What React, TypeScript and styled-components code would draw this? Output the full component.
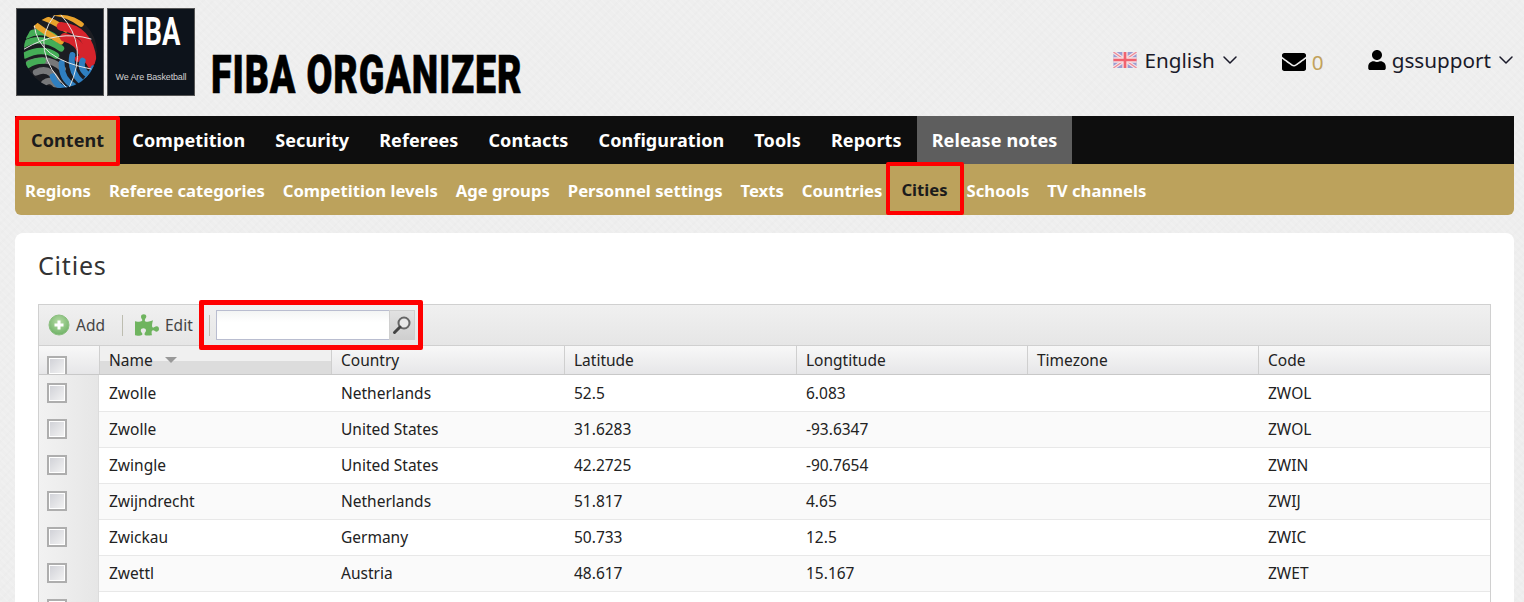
import styled, { createGlobalStyle } from "styled-components";
import { FaEnvelope, FaUser, FaPuzzlePiece } from "react-icons/fa";
import { FiChevronDown } from "react-icons/fi";

const mainMenu = ["Content", "Competition", "Security", "Referees", "Contacts", "Configuration", "Tools", "Reports", "Release notes"];
const subMenu = ["Regions", "Referee categories", "Competition levels", "Age groups", "Personnel settings", "Texts", "Countries", "Cities", "Schools", "TV channels"];
const columns = ["Name", "Country", "Latitude", "Longtitude", "Timezone", "Code"];
const rows = [
  ["Zwolle", "Netherlands", "52.5", "6.083", "", "ZWOL"],
  ["Zwolle", "United States", "31.6283", "-93.6347", "", "ZWOL"],
  ["Zwingle", "United States", "42.2725", "-90.7654", "", "ZWIN"],
  ["Zwijndrecht", "Netherlands", "51.817", "4.65", "", "ZWIJ"],
  ["Zwickau", "Germany", "50.733", "12.5", "", "ZWIC"],
  ["Zwettl", "Austria", "48.617", "15.167", "", "ZWET"],
  ["", "", "", "", "", ""],
];

const GlobalStyle = createGlobalStyle`
  html, body {
    margin: 0;
    height: 100%;
    overflow: hidden;
  }
  body {
    background-color: #eeeeee;
    background-image:
      repeating-linear-gradient(45deg, rgba(255,255,255,0.12) 0 2px, transparent 2px 5px),
      repeating-linear-gradient(-45deg, rgba(0,0,0,0.006) 0 2px, transparent 2px 7px);
    font-family: "Noto Sans", "Open Sans", sans-serif;
    color: #111;
  }
  * { box-sizing: border-box; }
`;

const Page = styled.div`
  padding: 8px 10px 0 15px;
`;

const Header = styled.header`
  display: flex;
  justify-content: space-between;
  height: 108px;
`;

const Brand = styled.div`
  display: flex;
  align-items: flex-start;
  padding-left: 1px;
`;

const LogoTile = styled.div`
  width: 88px;
  height: 88px;
  background: #0d131b;
  border: 1px solid #555;
  margin-right: 3px;
  display: flex;
  flex-direction: column;
  align-items: center;
`;

const LogoWord = styled.span`
  font-family: "Roboto", sans-serif;
  font-weight: 700;
  font-size: 38px;
  line-height: 36px;
  margin-top: 5px;
  color: #fff;
  transform: scaleX(0.72);
`;

const LogoTag = styled.span`
  font-family: "Liberation Sans", sans-serif;
  font-size: 9px;
  letter-spacing: -0.15px;
  color: #d0d0d0;
  margin-top: 22px;
  white-space: nowrap;
`;

const Title = styled.div`
  font-family: "Roboto", sans-serif;
  font-weight: 900;
  font-size: 53px;
  line-height: 53px;
  color: #000;
  letter-spacing: 1.2px;
  margin: 41px 0 0 13px;
  transform: scaleX(0.71);
  transform-origin: left center;
  -webkit-text-stroke: 0.6px #000;
  white-space: nowrap;
`;

const UserBar = styled.div`
  display: flex;
  align-items: center;
  height: 104px;
  margin-right: -4px;
  font-size: 20.7px;
  color: #1a1a2a;
`;

const UserItem = styled.div<{ $gap: number; $drop?: number }>`
  display: flex;
  align-items: center;
  margin-right: ${(p) => p.$gap}px;
  margin-top: ${(p) => p.$drop ?? 0}px;
  svg { flex: none; }
`;

const Chevron = styled(FiChevronDown)`
  width: 24px;
  height: 24px;
  margin-left: 3px;
  stroke-width: 1.5;
`;

const MailCount = styled.span`
  color: #c2a25c;
  margin-left: 6px;
`;

const MainMenu = styled.nav`
  display: flex;
  height: 48px;
  background: #0e0e0e;
`;

const MainItem = styled.div<{ $active?: boolean; $muted?: boolean }>`
  display: flex;
  align-items: center;
  padding: 0 15px;
  font-size: 18px;
  font-weight: 700;
  letter-spacing: 0.1px;
  color: ${(p) => (p.$active ? "#1c1c1c" : "#fff")};
  background: ${(p) => (p.$active ? "#bca25c" : p.$muted ? "#5e5e5e" : "transparent")};
  ${(p) =>
    p.$active &&
    `border: 4px solid #f00;
     border-radius: 2px;
     height: 50px;
     position: relative;
     padding: 0 12px 2px;
     margin-right: -3px;`}
`;

const SubMenu = styled.nav`
  display: flex;
  height: 51px;
  padding-left: 1px;
  background: #bca25c;
  border-radius: 0 0 6px 6px;
`;

const SubItem = styled.div<{ $active?: boolean }>`
  display: flex;
  align-items: center;
  padding: 1px 9px 0;
  font-size: 16.65px;
  font-weight: 700;
  color: ${(p) => (p.$active ? "#1c1c1c" : "#fff")};
  ${(p) =>
    p.$active &&
    `border: 4px solid #f00;
     border-radius: 2px;
     position: relative;
     margin: -2px -6px 0 -5px;
     padding: 2px 12px 0 11px;
     height: 53px;`}
`;

const Card = styled.main`
  margin-top: 18px;
  height: 400px;
  padding: 17px 23px 0;
  background: #fff;
  border-radius: 8px 8px 0 0;
`;

const CardTitle = styled.h1`
  margin: 0 0 20px;
  height: 34px;
  font-size: 25px;
  line-height: 30px;
  font-weight: 400;
  letter-spacing: 0.8px;
  color: #333;
`;

const Grid = styled.section`
  width: 1453px;
  border: 1px solid #d0d0d0;
  border-bottom: 0;
  font-size: 15.5px;
`;

const Toolbar = styled.div`
  display: flex;
  align-items: center;
  height: 40px;
  padding-left: 9px;
  background: linear-gradient(#f0f0f0, #e6e6e6);
  color: #444;
`;

const ToolButton = styled.div`
  display: flex;
  align-items: center;
  gap: 6px;
`;

const Separator = styled.div<{ $left: number; $right: number }>`
  width: 1px;
  height: 21px;
  background: #bdbdb0;
  margin: 0 ${(p) => p.$right}px 0 ${(p) => p.$left}px;
`;

const PuzzleIcon = styled(FaPuzzlePiece)`
  width: 24px;
  height: 24px;
  color: #6fb45f;
`;

const SearchBox = styled.div`
  position: relative;
  z-index: 1;
  display: flex;
  width: 199px;
  height: 30px;

  &::after {
    content: "";
    position: absolute;
    top: -10px;
    right: -8px;
    bottom: -10px;
    left: -17px;
    border: 5px solid #f00;
    border-radius: 2px;
  }
`;

const SearchInput = styled.div`
  flex: 1;
  border: 1px solid #b9bdd0;
  border-right: 0;
  background: linear-gradient(#f3f5f4, #fff 40%);
`;

const SearchButton = styled.div`
  display: flex;
  align-items: center;
  justify-content: center;
  width: 26px;
  border: 1px solid #cfcfcf;
  background: linear-gradient(#e2e2e2, #cfcfcf);
`;

const HeadRow = styled.div`
  display: grid;
  grid-template-columns: 60px 232px 233px 232px 231px 231px 1fr;
  height: 30px;
  border-top: 1px solid #d0d0d0;
  border-bottom: 1px solid #c8c8c8;
  background: linear-gradient(#f8f8f8, #e6e6e8);
  overflow: hidden;
`;

const HeadCell = styled.div<{ $sorted?: boolean }>`
  display: flex;
  align-items: center;
  gap: 12px;
  padding: 0 0 2px 9px;
  border-left: 1px solid #cfcfcf;
  color: #222;
  ${(p) => p.$sorted && "background: linear-gradient(#f0f0f0 50%, #dcdcdc 50%);"}
`;

const SortArrow = styled.span`
  width: 0;
  height: 0;
  border-left: 6px solid transparent;
  border-right: 6px solid transparent;
  border-top: 6px solid #999;
`;

const Row = styled.div<{ $even: boolean }>`
  display: grid;
  grid-template-columns: 60px 232px 233px 232px 231px 231px 1fr;
  height: 36px;
  background: ${(p) => (p.$even ? "#fafafa" : "#fff")};

  & + & {
    box-shadow: inset 0 1px 0 #e8e8e8;
  }
`;

const Cell = styled.div`
  display: flex;
  align-items: center;
  padding-left: 10px;
  color: #222;
`;

const CheckCell = styled.div<{ $head?: boolean }>`
  display: flex;
  justify-content: flex-start;
  align-items: center;
  padding-left: 8px;
  background: linear-gradient(90deg, #f2f2f2, #e6e6e6);
  border-right: 1px solid #dcdcdc;
  ${(p) => p.$head && "background: none; border-right: 0; padding-top: 10px;"}
`;

const Check = styled.div`
  width: 20px;
  height: 20px;
  border: 2px solid #aeaeae;
  background: linear-gradient(135deg, #cfd0d6, #f4f4f4);
  box-shadow: inset 0 0 0 1px #fff;
`;

const Flag = () => (
  <svg width="24" height="16" viewBox="0 0 26 18" style={{ marginRight: 7 }}>
    <rect width="26" height="18" fill="#9a9bd0" />
    <path d="M0 0L26 18M26 0L0 18" stroke="#f3e6ea" strokeWidth="4" />
    <path d="M0 0L26 18M26 0L0 18" stroke="#ef8a96" strokeWidth="1.4" />
    <path d="M13 0V18M0 9H26" stroke="#f7dfe2" strokeWidth="6" />
    <path d="M13 0V18M0 9H26" stroke="#f0626f" strokeWidth="3" />
  </svg>
);

const GlobeLogo = () => (
  <svg width="86" height="86" viewBox="18 10 258 258">
    <defs>
      <clipPath id="ball">
        <circle cx="148" cy="137" r="110" />
      </clipPath>
    </defs>
    <g clipPath="url(#ball)" fill="none" strokeLinecap="round">
      <circle cx="148" cy="137" r="110" fill="#1c1d22" />
      <path d="M55 172Q115 150 155 190M75 200Q115 180 140 228M100 232Q120 215 140 245" stroke="#77787a" strokeWidth="19" />
      <path d="M35 118Q90 85 150 128M40 150Q95 122 135 150M45 90Q95 65 135 98M50 178Q70 165 95 165" stroke="#45ad57" strokeWidth="19" />
      <path d="M70 55Q110 85 150 108M95 35Q135 50 165 72M130 22Q175 28 210 55" stroke="#e8a22b" strokeWidth="17" />
      <path d="M150 62Q235 72 244 165M160 95Q205 105 218 150" stroke="#d6242c" strokeWidth="26" />
      <path d="M200 160Q225 150 238 178" stroke="#d6242c" strokeWidth="18" />
      <path d="M125 212Q135 242 168 252M152 172Q150 222 190 242M184 148Q175 195 210 228M215 165Q205 190 232 208" stroke="#2f7fc0" strokeWidth="18" />
      <path d="M246 185Q228 228 188 252" stroke="#2f7fc0" strokeWidth="12" />
      <path d="M130 30Q50 130 170 250M40 130Q140 70 240 100M150 28Q235 120 175 245M70 60Q80 160 240 190" stroke="#e6e6e6" strokeWidth="3" />
    </g>
  </svg>
);

const AddIcon = () => (
  <svg width="22" height="22" viewBox="0 0 22 22">
    <defs>
      <radialGradient id="addFill" cx="50%" cy="35%" r="65%">
        <stop offset="0%" stopColor="#b7dca6" />
        <stop offset="100%" stopColor="#6fb267" />
      </radialGradient>
    </defs>
    <circle cx="11" cy="11" r="10" fill="url(#addFill)" stroke="#8cbf80" />
    <path d="M11 6.5V15.5M6.5 11H15.5" stroke="#fff" strokeWidth="3" />
  </svg>
);

const SearchIcon = () => (
  <svg width="20" height="20" viewBox="0 0 20 20" fill="none">
    <circle cx="12" cy="8" r="5.5" fill="#e8e8e8" stroke="#666" strokeWidth="2" />
    <path d="M8 12L2.5 17.5" stroke="#444" strokeWidth="3" strokeLinecap="round" />
  </svg>
);

const App = () => {
  return (
    <Page>
      <GlobalStyle />
      <Header>
        <Brand>
          <LogoTile>
            <GlobeLogo />
          </LogoTile>
          <LogoTile>
            <LogoWord>FIBA</LogoWord>
            <LogoTag>We Are Basketball</LogoTag>
          </LogoTile>
          <Title>FIBA ORGANIZER</Title>
        </Brand>
        <UserBar>
          <UserItem $gap={40}>
            <Flag />
            English
            <Chevron />
          </UserItem>
          <UserItem $gap={43} $drop={3}>
            <FaEnvelope size={24} color="#000" />
            <MailCount>0</MailCount>
          </UserItem>
          <UserItem $gap={0}>
            <FaUser size={20} color="#000" style={{ marginRight: 5 }} />
            gssupport
            <Chevron />
          </UserItem>
        </UserBar>
      </Header>

      <MainMenu>
        {mainMenu.map((item) => (
          <MainItem key={item} $active={item === "Content"} $muted={item === "Release notes"}>
            {item}
          </MainItem>
        ))}
      </MainMenu>
      <SubMenu>
        {subMenu.map((item) => (
          <SubItem key={item} $active={item === "Cities"}>
            {item}
          </SubItem>
        ))}
      </SubMenu>

      <Card>
        <CardTitle>Cities</CardTitle>
        <Grid>
          <Toolbar>
            <ToolButton>
              <AddIcon />
              Add
            </ToolButton>
            <Separator $left={17} $right={12} />
            <ToolButton>
              <PuzzleIcon />
              Edit
            </ToolButton>
            <Separator $left={16} $right={6} />
            <SearchBox>
              <SearchInput />
              <SearchButton>
                <SearchIcon />
              </SearchButton>
            </SearchBox>
          </Toolbar>
          <HeadRow>
            <CheckCell $head>
              <Check />
            </CheckCell>
            {columns.map((col) => (
              <HeadCell key={col} $sorted={col === "Name"}>
                {col}
                {col === "Name" && <SortArrow />}
              </HeadCell>
            ))}
          </HeadRow>
          {rows.map((row, i) => (
            <Row key={i} $even={i % 2 === 1}>
              <CheckCell>
                <Check />
              </CheckCell>
              {row.map((value, j) => (
                <Cell key={j}>{value}</Cell>
              ))}
            </Row>
          ))}
        </Grid>
      </Card>
    </Page>
  );
};

export default App;
